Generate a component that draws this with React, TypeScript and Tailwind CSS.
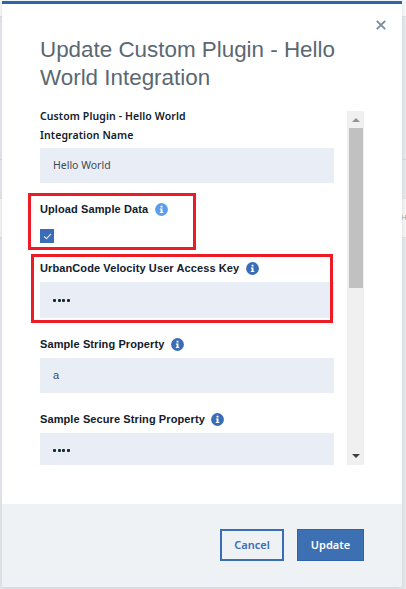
import type { ReactNode } from "react";

function Info({ className = "text-[#3a6db5]" }: { className?: string }) {
  return (
    <svg viewBox="0 0 13 13" className={`size-[13px] shrink-0 ${className}`}>
      <circle cx="6.5" cy="6.5" r="6.4" fill="currentColor" />
      <path d="M5.6 2.8h1.9v1.6H5.6zM4.9 5.4h2.6v3.5h.8v1.1H4.8V8.9h.8V6.4h-.7z" fill="#fff" />
    </svg>
  );
}

function Label({ children, icon }: { children: ReactNode; icon?: string }) {
  return (
    <div className="flex h-[14px] shrink-0 items-center gap-[6.5px] whitespace-nowrap text-[11px] font-bold tracking-[0.1px] text-[#10202b]">
      <span>{children}</span>
      <Info className={icon} />
    </div>
  );
}

function Dots() {
  return (
    <span className="flex gap-[1.6px]">
      {[0, 1, 2, 3].map((i) => (
        <i key={i} className="size-[3px] rounded-[1px] bg-[#152935]" />
      ))}
    </span>
  );
}

function Field({ children, className = "h-[35px]" }: { children: ReactNode; className?: string }) {
  return (
    <div className={`flex w-[294px] shrink-0 items-center bg-[#e9eef6] pl-[13px] text-[11px] text-[#3c4a54] ${className}`}>
      {children}
    </div>
  );
}

function Backdrop() {
  return (
    <div className="absolute inset-0 flex flex-col bg-[#e5e9ec]">
      <div className="h-[17px] border-b border-[#dde1e4] bg-[#f7f8f9]" />
      <div className="h-[143px] border-b border-[#d5dadd]" />
      <div className="h-[38px]" />
      <div className="flex h-[40px] items-center justify-end border-y border-[#dfe2e4] bg-[#f5f5f5] text-[8px] text-[#a39a90]">
        <span className="w-[5px]">H</span>
      </div>
    </div>
  );
}

export default function App() {
  return (
    <div className="relative flex h-[589px] w-[406px] overflow-hidden pl-[2px] pt-px font-['Liberation_Sans',Arial,sans-serif]">
      <Backdrop />
      <main className="relative flex h-[586px] w-[400px] shrink-0 flex-col border-t-[3px] border-[#2d64ad] bg-white shadow-[0_1px_4px_rgba(70,80,90,0.15)]">
        <header className="flex h-[107px] shrink-0 items-start pl-[38px]">
          <h1 className="mt-[32px] w-[310px] whitespace-nowrap text-[22.4px] leading-[28px] text-[#5a6872]">
            Update Custom Plugin - Hello
            <br />
            World Integration
          </h1>
          <svg viewBox="0 0 10 10" className="ml-[26px] mt-[16px] size-[10px]" stroke="#7c8d9c" strokeWidth="1.9">
            <path d="M.8.8l8.4 8.4M9.2.8L.8 9.2" />
          </svg>
        </header>
        <section className="flex h-[354px] shrink-0 pl-[38px]">
          <div className="flex w-[307px] flex-col overflow-hidden">
            <div className="-mt-[4px] flex shrink-0 flex-col whitespace-nowrap pb-[5px] font-['Noto_Sans','Open_Sans',sans-serif] text-[10.5px] font-semibold leading-[19px] tracking-[0.1px] text-[#10202b]">
              <span>Custom Plugin - Hello World</span>
              <span className="-mb-[2px]">Integration Name</span>
            </div>
            <Field>
              <span className="font-['Noto_Sans','Open_Sans',sans-serif] text-[10.5px]">Hello World</span>
            </Field>
            <div className="h-[19px] shrink-0" />
            <Label icon="text-[#5b9cec]">Upload Sample Data</Label>
            <div className="mb-[18px] mt-[13px] flex size-[14px] shrink-0 items-center justify-center bg-[#3a6db5]">
              <svg viewBox="0 0 10 8" className="h-[7px] w-[9px]" fill="none" stroke="#dbe6f5" strokeWidth="1.3">
                <path d="M1 3.8l2.8 2.7L9 1" />
              </svg>
            </div>
            <Label>UrbanCode Velocity User Access Key</Label>
            <div className="h-[7px] shrink-0" />
            <Field className="h-[36px]"><Dots /></Field>
            <div className="h-[19px] shrink-0" />
            <Label>Sample String Property</Label>
            <div className="h-[7px] shrink-0" />
            <Field><span>a</span></Field>
            <div className="h-[19px] shrink-0" />
            <Label>Sample Secure String Property</Label>
            <div className="h-[7px] shrink-0" />
            <Field><Dots /></Field>
          </div>
          <div className="flex w-[17px] flex-col items-center bg-[#f0f0f0]">
            <div className="flex h-[17px] items-center">
              <svg viewBox="0 0 8 4" className="h-[4px] w-[8px]"><path d="M0 4L4 0l4 4z" fill="#929292" /></svg>
            </div>
            <div className="h-[160px] w-[14px] bg-[#c1c1c1]" />
            <div className="mb-[7px] mt-auto">
              <svg viewBox="0 0 8 4" className="h-[4px] w-[8px]"><path d="M0 0l4 4 4-4z" fill="#404040" /></svg>
            </div>
          </div>
        </section>
        <footer className="mt-auto flex h-[83px] shrink-0 gap-[13px] bg-[#eef2f5] pl-[218px] pt-[25px] font-['Noto_Sans','Open_Sans',sans-serif] text-[11px] font-semibold">
          <button className="h-[32px] w-[64px] border-2 border-[#3a6db5] text-[#3a6db5]">Cancel</button>
          <button className="h-[32px] w-[67px] border border-[#2d64ad] bg-[#3d70b2] text-white">Update</button>
        </footer>
      </main>
      <div className="absolute left-[28px] top-[193px] h-[57px] w-[168px] border-[3px] border-[#ed1c24]" />
      <div className="absolute left-[31px] top-[254px] h-[69px] w-[302px] border-[3px] border-[#ed1c24]" />
    </div>
  );
}
